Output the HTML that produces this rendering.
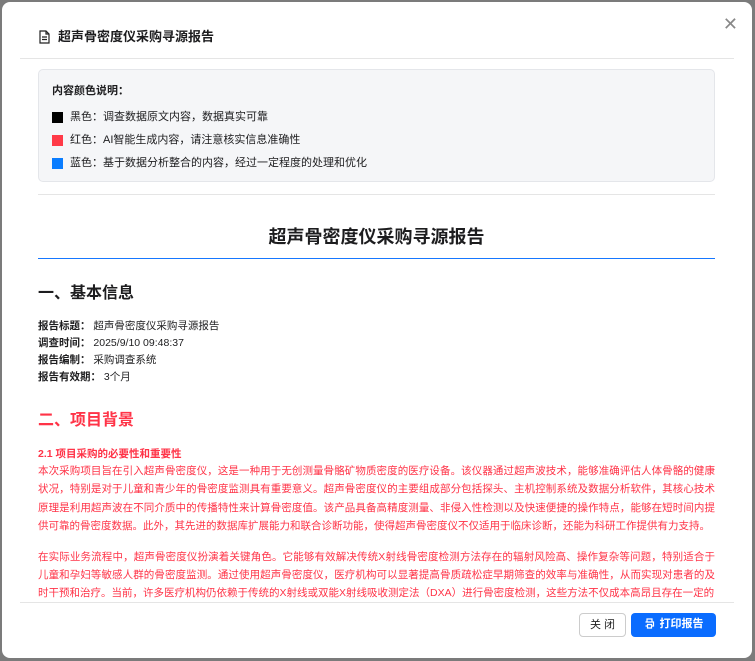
<!DOCTYPE html>
<html><head><meta charset="utf-8"><style>
*{margin:0;padding:0;box-sizing:border-box}
body{width:755px;height:661px;background:#7b7b7b;font-family:"Liberation Sans","Noto Sans CJK SC",sans-serif;overflow:hidden;position:relative;color:#1d1d1f}
.modal{position:absolute;left:2px;top:2px;width:750px;height:656px;background:#fff;border-radius:8px;overflow:hidden}
.hdr{position:absolute;left:18px;right:18px;top:0;height:57px;border-bottom:1px solid #e5e5e5}
.hdr .t{position:absolute;left:18px;top:27px;font-size:13px;font-weight:bold;line-height:16px}
.close{position:absolute;right:14px;top:12px;font-size:18px;color:#888;font-weight:300}
.body{position:absolute;left:36px;width:677px;top:67px;height:533px;overflow:hidden}
.legend{background:#f5f6f8;border:1px solid #e4e6ea;border-radius:5px;height:113px;padding:14px 13px;font-size:11px;line-height:14px}
.legend .r{margin-top:9px;display:flex;align-items:center}
.sq{width:11px;height:11px;margin-right:7px;display:inline-block}
.sep{border-top:1px solid #e5e5e5;margin-top:12px}
h1{text-align:center;font-size:18px;margin-top:30px;line-height:24px;padding-bottom:9px;border-bottom:1px solid #1677ff}
h2{font-size:16px;margin-top:25px;line-height:20px}
.info{margin-top:14px;font-size:10.5px;line-height:17px}
.red{color:#ff3347}
h3{font-size:10.5px;margin-top:16px;line-height:14px}
p{font-size:10.5px;line-height:18.4px;margin-top:1px;text-align:justify}
.ftr{position:absolute;left:18px;right:18px;top:600px;border-top:1px solid #e5e5e5;height:56px}
.btn{position:absolute;top:10px;height:24px;border-radius:4px;font-size:11px;line-height:22px;text-align:center}
</style></head><body>
<div class="modal">
<div class="hdr"><svg style="position:absolute;left:19px;top:28px" width="11" height="14" viewBox="0 0 11 14"><path d="M1 1h6l3 3v9H1z M7 1v3h3 M3 7h5 M3 9.5h5" fill="none" stroke="#222" stroke-width="1.2"/></svg><div class="t" style="left:38px">超声骨密度仪采购寻源报告</div></div>
<div class="close">✕</div>
<div class="body">
<div class="legend"><div style="font-weight:bold">内容颜色说明：</div>
<div class="r" style="margin-top:12px"><span class="sq" style="background:#000"></span>黑色：调查数据原文内容，数据真实可靠</div>
<div class="r"><span class="sq" style="background:#ff3a48"></span>红色：AI智能生成内容，请注意核实信息准确性</div>
<div class="r"><span class="sq" style="background:#0a7dff"></span>蓝色：基于数据分析整合的内容，经过一定程度的处理和优化</div></div>
<div class="sep"></div>
<h1>超声骨密度仪采购寻源报告</h1>
<h2>一、基本信息</h2>
<div class="info"><div><b>报告标题：</b> 超声骨密度仪采购寻源报告</div><div><b>调查时间：</b> 2025/9/10 09:48:37</div><div><b>报告编制：</b> 采购调查系统</div><div><b>报告有效期：</b> 3个月</div></div>
<h2 class="red" style="margin-top:25px">二、项目背景</h2>
<h3 class="red">2.1 项目采购的必要性和重要性</h3>
<p class="red">本次采购项目旨在引入超声骨密度仪，这是一种用于无创测量骨骼矿物质密度的医疗设备。该仪器通过超声波技术，能够准确评估人体骨骼的健康状况，特别是对于儿童和青少年的骨密度监测具有重要意义。超声骨密度仪的主要组成部分包括探头、主机控制系统及数据分析软件，其核心技术原理是利用超声波在不同介质中的传播特性来计算骨密度值。该产品具备高精度测量、非侵入性检测以及快速便捷的操作特点，能够在短时间内提供可靠的骨密度数据。此外，其先进的数据库扩展能力和联合诊断功能，使得超声骨密度仪不仅适用于临床诊断，还能为科研工作提供有力支持。</p>
<p class="red" style="margin-top:12px">在实际业务流程中，超声骨密度仪扮演着关键角色。它能够有效解决传统X射线骨密度检测方法存在的辐射风险高、操作复杂等问题，特别适合于儿童和孕妇等敏感人群的骨密度监测。通过使用超声骨密度仪，医疗机构可以显著提高骨质疏松症早期筛查的效率与准确性，从而实现对患者的及时干预和治疗。当前，许多医疗机构仍依赖于传统的X射线或双能X射线吸收测定法（DXA）进行骨密度检测，这些方法不仅成本高昂且存在一定的</p>
</div>
<div class="ftr">
<div class="btn" style="left:559px;width:47px;border:1px solid #ccc;color:#222">关 闭</div>
<div class="btn" style="left:611px;width:85px;background:#0a6cff;color:#fff;font-weight:bold"><svg style="vertical-align:-2px;margin-right:5px" width="11" height="11" viewBox="0 0 11 11"><path d="M3 4V1h5v3 M1.5 4h8v4h-2 M3.5 8h-2 M3.5 6.5h4V10h-4z" fill="none" stroke="#fff" stroke-width="1.2"/></svg>打印报告</div>
</div>
</div>
</body></html>
